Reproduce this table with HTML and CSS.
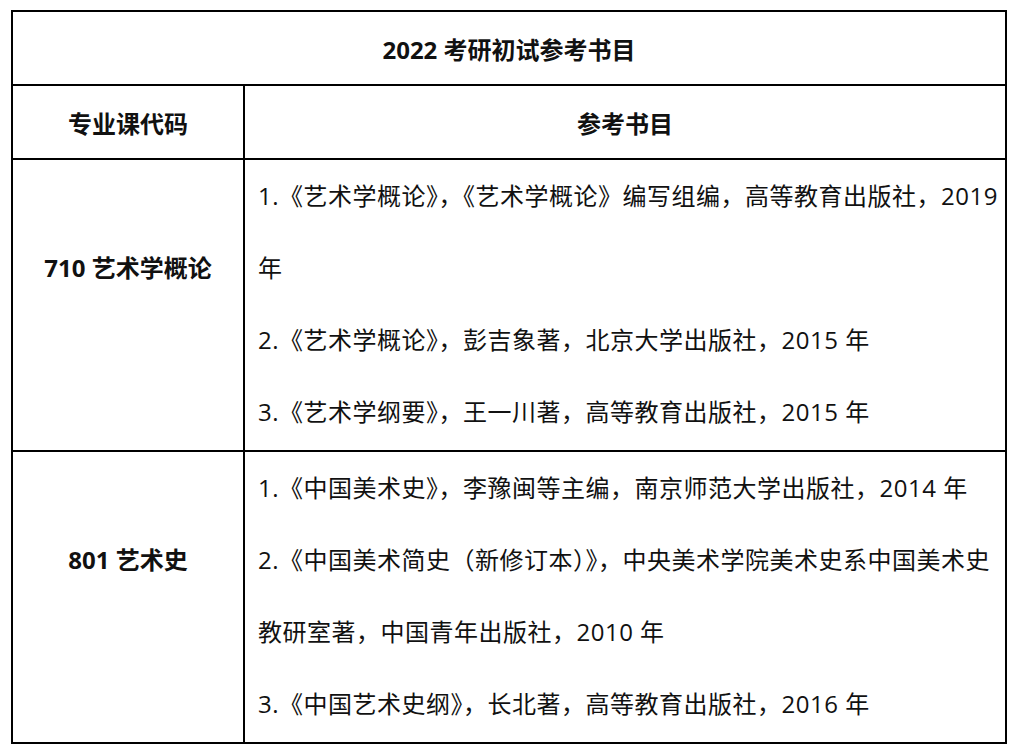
FILE: index.html
```html
<!DOCTYPE html>
<html lang="zh-CN">
<head>
<meta charset="utf-8">
<title>2022 考研初试参考书目</title>
<link rel="stylesheet" href="styles.css">
</head>
<body>
<table class="books">
  <colgroup>
    <col class="col-code">
    <col class="col-refs">
  </colgroup>
  <tr>
    <th class="title" colspan="2">2022 考研初试参考书目</th>
  </tr>
  <tr class="head">
    <th class="code">专业课代码</th>
    <th class="refs-head">参考书目</th>
  </tr>
  <tr>
    <td class="code">710 艺术学概论</td>
    <td class="refs">1.《艺术学概论》，《艺术学概论》编写组编，高等教育出版社，2019 年<br>2.《艺术学概论》，彭吉象著，北京大学出版社，2015 年<br>3.《艺术学纲要》，王一川著，高等教育出版社，2015 年</td>
  </tr>
  <tr>
    <td class="code">801 艺术史</td>
    <td class="refs">1.《中国美术史》，李豫闽等主编，南京师范大学出版社，2014 年<br>2.《中国美术简史（新修订本）》，中央美术学院美术史系中国美术史教研室著，中国青年出版社，2010 年<br>3.《中国艺术史纲》，长北著，高等教育出版社，2016 年</td>
  </tr>
</table>
</body>
</html>
```

FILE: styles.css
```css
html, body {
  margin: 0;
  padding: 0;
  background: #fff;
}
body {
  padding: 10px 0 0 11px;
  font-family: "Open Sans", "Noto Sans CJK SC", sans-serif;
  color: #111;
}
.books {
  border-collapse: collapse;
  width: 996px;
  table-layout: fixed;
}
.col-code {
  width: 232px;
}
.books th, .books td {
  border: 2px solid #000;
  padding: 0;
}
.books th {
  font-weight: 700;
  font-size: 24px;
  height: 72px;
  text-align: center;
  vertical-align: middle;
}
.books td.code {
  font-size: 24px;
  font-weight: 700;
  text-align: center;
  vertical-align: middle;
  padding-bottom: 78px;
}
.books td.refs {
  font-size: 24px;
  line-height: 72px;
  padding: 0 6px 2px 13px;
  text-align: left;
  vertical-align: top;
  letter-spacing: 0.5px;
}
```
